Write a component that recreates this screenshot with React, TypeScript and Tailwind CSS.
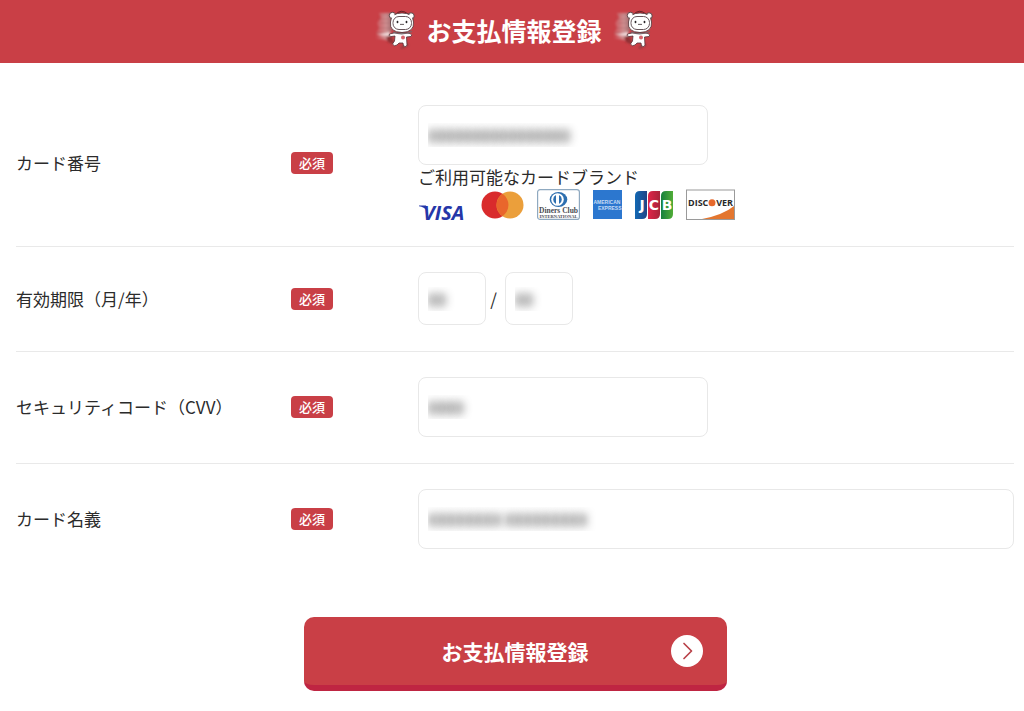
import React from "react";

function Mascot() {
  return (
    <svg viewBox="0 0 40 40" className="h-10 w-10 shrink-0" aria-hidden="true">
      <defs>
        <linearGradient id="trail" x1="0" x2="1">
          <stop offset="0" stopColor="#d8a0a3" stopOpacity="0.15" />
          <stop offset="0.6" stopColor="#d3a5a6" stopOpacity="0.8" />
          <stop offset="1" stopColor="#946062" />
        </linearGradient>
        <filter id="soft">
          <feGaussianBlur stdDeviation="0.8" />
        </filter>
      </defs>
      <g filter="url(#soft)">
        <path d="M4 3H17V20L14 24L18 29L11 30L0 28L7 26L1 23L4 18L2 13L6 8Z" fill="url(#trail)" />
        <path d="M5 5H15M3 9H15M5 13H15M3 18H16M1 23H15" stroke="#8d5053" strokeWidth="0.8" opacity="0.5" />
        <path d="M1 25L15 22V26Z" fill="#f2dddd" />
        <path d="M11 27L16 25L20 35L13 32Z" fill="#8e3034" />
        <path d="M19 35L25 38L31 33L34 35L27 39Z" fill="#6d3437" opacity="0.6" />
      </g>
      <path d="M20 5Q26 -2 33 4" fill="#bd2932" stroke="#5f2226" strokeWidth="0.9" />
      <circle cx="17.500" cy="5.500" r="3.200" fill="#fff" stroke="#4c3033" strokeWidth="0.9" />
      <circle cx="36" cy="6" r="3.200" fill="#fff" stroke="#4c3033" strokeWidth="0.9" />
      <path
        d="M15.500 12Q16 3 27 3Q38 3 38.500 12Q39.500 22 27 22.500Q14 22 15.500 12Z"
        fill="#fff"
        stroke="#4c3033"
        strokeWidth="0.8"
      />
      <circle cx="17.800" cy="6" r="2" fill="#fff" />
      <circle cx="35.800" cy="6.300" r="2" fill="#fff" />
      <rect x="18" y="6.500" width="18.500" height="13" rx="6" fill="#fff" stroke="#66555a" strokeWidth="1" />
      <ellipse cx="22.500" cy="12" rx="0.9" ry="1.200" fill="#272326" />
      <ellipse cx="31.500" cy="12" rx="0.9" ry="1.200" fill="#272326" />
      <path d="M25 14Q26 15.500 27 14Q28 15.500 29 14" fill="none" stroke="#3a3033" strokeWidth="0.8" />
      <path
        d="M19 23L14.500 24Q13 26 16 26.500L20 26L19.500 31L17.500 34Q19 37 22 35L24 33H28L28.500 36Q31.500 37.500 32 35L31.500 27L36 26.500Q38 25 35 23.500L32 23Z"
        fill="#fff"
        stroke="#543438"
        strokeWidth="0.8"
      />
      <path d="M18 22Q27 26 37 21.500" fill="none" stroke="#76686c" strokeWidth="1.200" />
      <circle cx="28" cy="27.500" r="2" fill="#d7636b" />
    </svg>
  );
}

function Visa() {
  return (
    <svg viewBox="0 0 50 31" className="h-[31px] w-[50px] overflow-visible" role="img" aria-label="VISA">
      <path d="M1 16.500H8L9.500 22Q6 18 1 17.300Z" fill="#2536a8" />
      <text x="5" y="31" fill="#2536a8" fontFamily="Open Sans, sans-serif" fontSize="20" fontWeight="700" fontStyle="italic">
        VISA
      </text>
    </svg>
  );
}

function Mastercard() {
  return (
    <svg viewBox="0 0 43 31" className="h-[31px] w-[43px]" role="img" aria-label="Mastercard">
      <circle cx="14" cy="16" r="13.500" fill="#d92b2c" />
      <circle cx="29" cy="16" r="13.500" fill="#eb9f3b" />
      <path d="M21.500 4.800A13.500 13.500 0 0 1 21.500 27.200A13.500 13.500 0 0 1 21.500 4.800Z" fill="#e9662c" />
    </svg>
  );
}

function Diners() {
  return (
    <svg viewBox="0 0 43 31" className="h-[31px] w-[43px]" role="img" aria-label="Diners Club International">
      <rect x="0.600" y="0.600" width="41.800" height="29.800" rx="2.500" fill="#fff" stroke="#8fa9c0" strokeWidth="1.200" />
      <ellipse cx="21.500" cy="10.500" rx="8.800" ry="7.500" fill="#2e6faf" />
      <circle cx="20.500" cy="10.500" r="6.300" fill="#fff" />
      <path d="M19 6A5 5 0 0 0 19 15ZM22 6A5 5 0 0 1 22 15Z" fill="#2e6faf" />
      <text x="21.500" y="24" textAnchor="middle" fill="#4b4b52" fontFamily="Liberation Serif, serif" fontSize="7.500" fontWeight="700">
        Diners Club
      </text>
      <text x="21.500" y="28.500" textAnchor="middle" fill="#4b4b52" fontFamily="Liberation Serif, serif" fontSize="4.500" fontWeight="700">
        INTERNATIONAL
      </text>
    </svg>
  );
}

function Amex() {
  return (
    <svg viewBox="0 0 29 31" className="h-[31px] w-[29px]" role="img" aria-label="American Express">
      <rect y="1" width="29" height="29" fill="#2c77cf" />
      <g fill="#c6dcf5" fontFamily="Liberation Sans, sans-serif" fontSize="5" fontWeight="700">
        <text x="0.500" y="14.500">
          AMERICAN
        </text>
        <text x="28.500" y="20.500" textAnchor="end">
          EXPRESS
        </text>
      </g>
    </svg>
  );
}

function Jcb() {
  return (
    <svg viewBox="0 0 38 31" className="h-[31px] w-[38px]" role="img" aria-label="JCB">
      <defs>
        <linearGradient id="jcb-blue">
          <stop stopColor="#1268b3" />
          <stop offset="1" stopColor="#214586" />
        </linearGradient>
        <linearGradient id="jcb-red">
          <stop stopColor="#df2548" />
          <stop offset="1" stopColor="#a82339" />
        </linearGradient>
        <linearGradient id="jcb-green">
          <stop stopColor="#16813d" />
          <stop offset="1" stopColor="#51ad37" />
        </linearGradient>
      </defs>
      <path d="M5 2H12V25Q12 30 7 30H0V7Q0 2 5 2Z" fill="url(#jcb-blue)" />
      <path d="M18 2H25V25Q25 30 20 30H13V7Q13 2 18 2Z" fill="url(#jcb-red)" />
      <path d="M31 2H38V25Q38 30 33 30H26V7Q26 2 31 2Z" fill="url(#jcb-green)" />
      <g fill="#fff" fontFamily="DejaVu Sans, sans-serif" fontSize="14" fontWeight="700" textAnchor="middle">
        <text x="7" y="21">
          J
        </text>
        <text x="19" y="21">
          C
        </text>
        <text x="32" y="21">
          B
        </text>
      </g>
    </svg>
  );
}

function Discover() {
  return (
    <svg viewBox="0 0 49 31" className="h-[31px] w-[49px]" role="img" aria-label="Discover">
      <rect x="0.500" y="1" width="48" height="29.500" fill="#fff" stroke="#9a9a9a" />
      <path d="M16 30Q37 26 48 17V30Z" fill="#e3762f" />
      <g fill="#292929" fontFamily="Open Sans, sans-serif" fontSize="9" fontWeight="700">
        <text x="2" y="17">
          DISC
        </text>
        <text x="47" y="17" textAnchor="end">
          VER
        </text>
      </g>
      <circle cx="26" cy="13.700" r="3.500" fill="#e7692b" />
    </svg>
  );
}

function Row({ label, id, last = false, children }: { label: string; id: string; last?: boolean; children: React.ReactNode }) {
  return (
    <div
      className={
        "grid grid-cols-[275px_127px_1fr] items-center pt-[25px] " + (last ? "" : "border-b border-[#e9e9e9] pb-[26px]")
      }
    >
      <label htmlFor={id} className="text-[17px] leading-6">
        {label}
      </label>
      <span className="w-fit rounded-[4px] bg-[#c93f46] px-2 text-[13px] font-medium leading-[22px] text-white">必須</span>
      <div>{children}</div>
    </div>
  );
}

const field =
  "block rounded-lg border border-[#e8e8e8] bg-white px-[9px] text-base text-transparent outline-none [text-shadow:0_0_8px_#222]";

export default function App() {
  return (
    <main className="min-h-screen bg-white font-['Noto_Sans_CJK_JP',sans-serif] text-[#2b2b2b]">
      <header className="flex h-[63px] items-center justify-center gap-[11px] bg-[#c93f46] pb-1 pl-1 text-white">
        <Mascot />
        <h1 className="text-[25px] font-bold leading-9">お支払情報登録</h1>
        <Mascot />
      </header>

      <form className="pl-4 pr-[10px] pt-[17px]" onSubmit={(e) => e.preventDefault()}>
        <Row label="カード番号" id="number">
          <input id="number" className={field + " h-[60px] w-[290px]"} defaultValue="0000000000000000" />
          <p className="text-[17px] leading-6">ご利用可能なカードブランド</p>
          <div className="flex gap-[13px]">
            <Visa />
            <Mastercard />
            <Diners />
            <Amex />
            <Jcb />
            <Discover />
          </div>
        </Row>
        <Row label="有効期限（月/年）" id="month">
          <div className="flex items-center">
            <input id="month" aria-label="月" className={field + " h-[53px] w-[68px]"} defaultValue="00" />
            <span className="w-[19px] pr-1 text-center text-[17px]">/</span>
            <input id="year" aria-label="年" className={field + " h-[53px] w-[68px]"} defaultValue="00" />
          </div>
        </Row>
        <Row label="セキュリティコード（CVV）" id="cvv">
          <input id="cvv" className={field + " h-[60px] w-[290px]"} defaultValue="0000" />
        </Row>
        <Row label="カード名義" id="holder" last>
          <input id="holder" className={field + " h-[60px] w-full"} defaultValue="XXXXXXXX XXXXXXXXX" />
        </Row>

        <button
          type="submit"
          className="mx-auto mt-[68px] grid h-[74px] w-[423px] grid-cols-[32px_1fr_32px] items-center rounded-[10px] border-b-[6px] border-[#bf2542] bg-[#c93f46] px-6 text-white"
        >
          <span className="col-start-2 text-[21px] font-bold leading-8">お支払情報登録</span>
          <svg viewBox="0 0 32 32" className="h-8 w-8" aria-hidden="true">
            <circle cx="16" cy="16" r="16" fill="#fff" />
            <path d="M13 8.500L20.500 16L13 23.500" fill="none" stroke="#b94249" strokeWidth="1.700" strokeLinecap="round" strokeLinejoin="round" />
          </svg>
        </button>
      </form>
    </main>
  );
}
